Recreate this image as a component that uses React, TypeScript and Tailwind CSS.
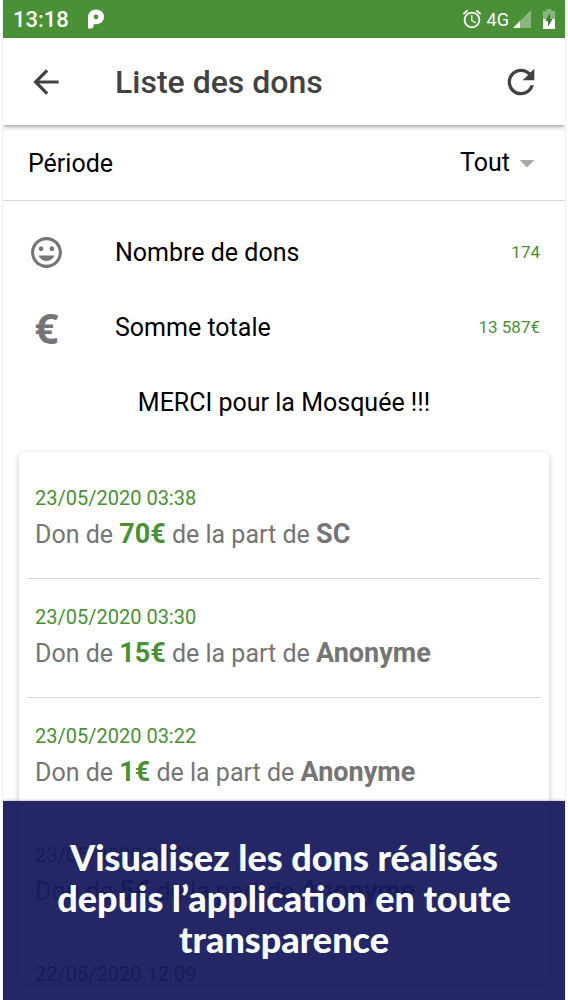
import { useState } from 'react'
import { MdAlarm, MdArrowBack, MdArrowDropDown, MdRefresh, MdTagFaces } from 'react-icons/md'

interface Donation {
  id: number
  date: string
  amount?: string
  from?: string
}

const donations: Donation[] = [
  { id: 1, date: '23/05/2020 03:38', amount: '70€', from: 'SC' },
  { id: 2, date: '23/05/2020 03:30', amount: '15€', from: 'Anonyme' },
  { id: 3, date: '23/05/2020 03:22', amount: '1€', from: 'Anonyme' },
  { id: 4, date: '23/05/2020 00:35', amount: '5€', from: 'Anonyme' },
  { id: 5, date: '22/05/2020 12:09' },
]

function StatusBar() {
  return (
    <div className="flex h-[38px] shrink-0 items-center bg-[#4a9036] px-[10px] text-white">
      <span className="text-[22px] font-medium">13:18</span>
      <svg className="ml-[18px] h-5 w-[18px]" viewBox="0 0 18 20" aria-hidden="true">
        <path
          fill="currentColor"
          fillRule="evenodd"
          d="M1 8.500C1 3.500 4.500 .500 9 .500c4.700 0 8 3 8 7.300s-3.300 7.400-7.700 7.400H6.500V18L5 19.500H1zM9 5.600a2.300 2.300 0 1 0 0 4.600 2.300 2.300 0 0 0 0-4.600z"
        />
      </svg>
      <div className="ml-auto flex items-center">
        <MdAlarm className="size-[22px]" />
        <span className="ml-1 text-[18px]">4G</span>
        <svg className="ml-1 size-[18px]" viewBox="0 0 18 18" aria-hidden="true">
          <path fill="currentColor" opacity="0.35" d="M18 0v18H0z" />
          <path fill="currentColor" d="M7 11v7H0z" />
        </svg>
        <svg className="ml-3 h-5 w-3" viewBox="0 0 12 20" aria-hidden="true">
          <path fill="currentColor" opacity="0.35" d="M3.500 0h5v2H12v8H0V2h3.500z" />
          <path fill="currentColor" d="M0 10h12v10H0z" />
          <path fill="#3d7a2c" d="M7 4v6h2.500L5 17.500V12H2.500z" />
        </svg>
      </div>
    </div>
  )
}

function DonationItem({ donation }: { donation: Donation }) {
  return (
    <li className="shrink-0 border-b border-[#d8d8d8] px-2 pt-7 last:border-b-0">
      <p className="text-[20px] leading-[20px] text-[#4a9036]">{donation.date}</p>
      {donation.amount && (
        <p className="mt-[5px] mb-[22px] text-[25px] leading-[42px] text-[#757575]">
          Don de <b className="text-[27px] font-bold text-[#4a9036]">{donation.amount}</b> de la part de{' '}
          <b className="text-[27px] font-bold">{donation.from}</b>
        </p>
      )}
    </li>
  )
}

export default function App() {
  const [period, setPeriod] = useState('Tout')

  return (
    <div className="relative mx-[3px] flex h-screen flex-col overflow-hidden bg-white font-['Roboto',sans-serif] text-black shadow-[0_0_0_1px_#f0f0f0]">
      <StatusBar />

      {/* App bar */}
      <header className="relative flex h-[87px] shrink-0 items-center bg-white px-6 text-[#424242] shadow-[0_2px_4px_rgba(0,0,0,0.35)]">
        <button type="button" aria-label="Retour">
          <MdArrowBack className="size-[38px]" />
        </button>
        <h1 className="ml-[50px] text-[32px] font-medium">Liste des dons</h1>
        <button type="button" aria-label="Actualiser" className="ml-auto">
          <MdRefresh className="size-10" />
        </button>
      </header>

      {/* Period */}
      <div className="flex h-[76px] shrink-0 items-center justify-between border-b border-[#d8d8d8] pr-5 pl-[25px] text-[25px]">
        <label htmlFor="period" className="pt-[2px]">
          Période
        </label>
        <div className="relative">
          <select
            id="period"
            value={period}
            onChange={(e) => setPeriod(e.target.value)}
            className="field-sizing-content appearance-none bg-transparent pr-[35px]"
          >
            <option>Tout</option>
          </select>
          <MdArrowDropDown className="pointer-events-none absolute inset-y-0 right-0 my-auto size-9 text-[#a8a8a8]" />
        </div>
      </div>

      {/* Totals */}
      <dl className="shrink-0 pt-[14px]">
        <div className="flex h-[75px] items-center px-[25px]">
          <MdTagFaces className="size-[37px] text-[#757575]" />
          <dt className="ml-[50px] text-[25px]">Nombre de dons</dt>
          <dd className="ml-auto text-[17px] text-[#4a9036]">174</dd>
        </div>
        <div className="flex h-[75px] items-center px-[25px]">
          <span className="w-[37px] text-center font-['Noto_Sans','Open_Sans',sans-serif] text-[42px] leading-[42px] font-bold text-[#757575]">
            €
          </span>
          <dt className="ml-[50px] text-[25px]">Somme totale</dt>
          <dd className="ml-auto text-[17px] text-[#4a9036]">13 587€</dd>
        </div>
      </dl>
      <p className="flex h-[75px] shrink-0 items-center justify-center text-[25px]">MERCI pour la Mosquée !!!</p>

      {/* Donations */}
      <ul className="mx-4 mt-3 mb-4 flex min-h-0 flex-1 flex-col overflow-hidden rounded-md px-2 pt-2 shadow-[0_2px_6px_rgba(0,0,0,0.22)]">
        {donations.map((donation) => (
          <DonationItem key={donation.id} donation={donation} />
        ))}
      </ul>

      {/* Caption */}
      <div className="absolute inset-x-0 bottom-0 bg-[#111459]/92 px-10 pt-9 pb-10 text-center font-['Lato',sans-serif] text-[36px] leading-[41px] font-black text-[#f8fcff] shadow-[0_0_3px_rgba(0,0,0,0.4)]">
        Visualisez les dons réalisés depuis l’application en toute transparence
      </div>
    </div>
  )
}
